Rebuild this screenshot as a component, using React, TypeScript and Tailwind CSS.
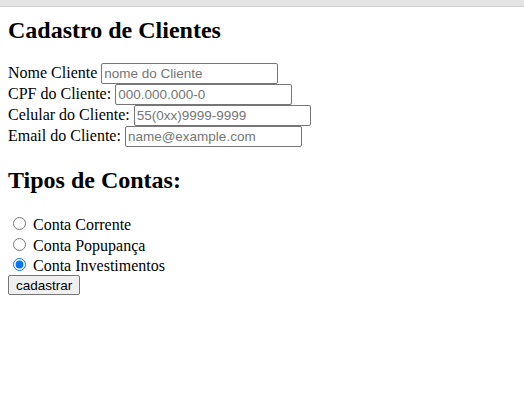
const inputCls =
  "w-[177px] h-[21px] px-[2px] py-[1px] border border-[#767676] rounded-[2px] bg-white font-['Liberation_Sans',Arial,sans-serif] text-[13.5px] leading-[normal] text-black placeholder:text-[#757575] align-baseline";

function Field({ label, placeholder, type = "text" }: { label: string; placeholder: string; type?: string }) {
  return (
    <>
      {label} <input type={type} placeholder={placeholder} className={inputCls} />
      <br />
    </>
  );
}

function Radio({ label, checked }: { label: string; checked?: boolean }) {
  return (
    <>
      <input type="radio" name="conta" defaultChecked={checked} className="mt-[3px] mr-[3px] ml-[5px] mb-0 align-baseline" />
      {" "}
      <label>{label}</label>
      <br />
    </>
  );
}

export default function App() {
  return (
    <div className="min-h-[407px] bg-white text-black font-['Liberation_Serif','Times_New_Roman',serif] text-[16px] leading-[1.15]">
      <div className="h-[7px] bg-[#e4e4e4] border-b border-[#cfcfcf]" />
      <div className="px-2">
        <h2 className="text-[24px] font-bold leading-[1.15] mt-[10px] mb-[18px]">Cadastro de Clientes</h2>
        <form>
          <Field label="Nome Cliente" placeholder="nome do Cliente" />
          <Field label="CPF do Cliente:" placeholder="000.000.000-0" />
          <Field label="Celular do Cliente:" placeholder="55(0xx)9999-9999" />
          <Field label="Email do Cliente:" placeholder="name@example.com" type="email" />
          <h2 className="text-[24px] font-bold leading-[1.15] mt-[20px] mb-[20px]">Tipos de Contas:</h2>
          <Radio label="Conta Corrente" />
          <Radio label="Conta Popupança" />
          <Radio label="Conta Investimentos" checked />
          <button
            type="button"
            className="h-[20px] px-[7px] py-[1px] border border-[#767676] rounded-[2px] bg-[#efefef] font-['Liberation_Sans',Arial,sans-serif] text-[13.5px] leading-[normal] text-black"
          >
            cadastrar
          </button>
        </form>
      </div>
    </div>
  );
}
